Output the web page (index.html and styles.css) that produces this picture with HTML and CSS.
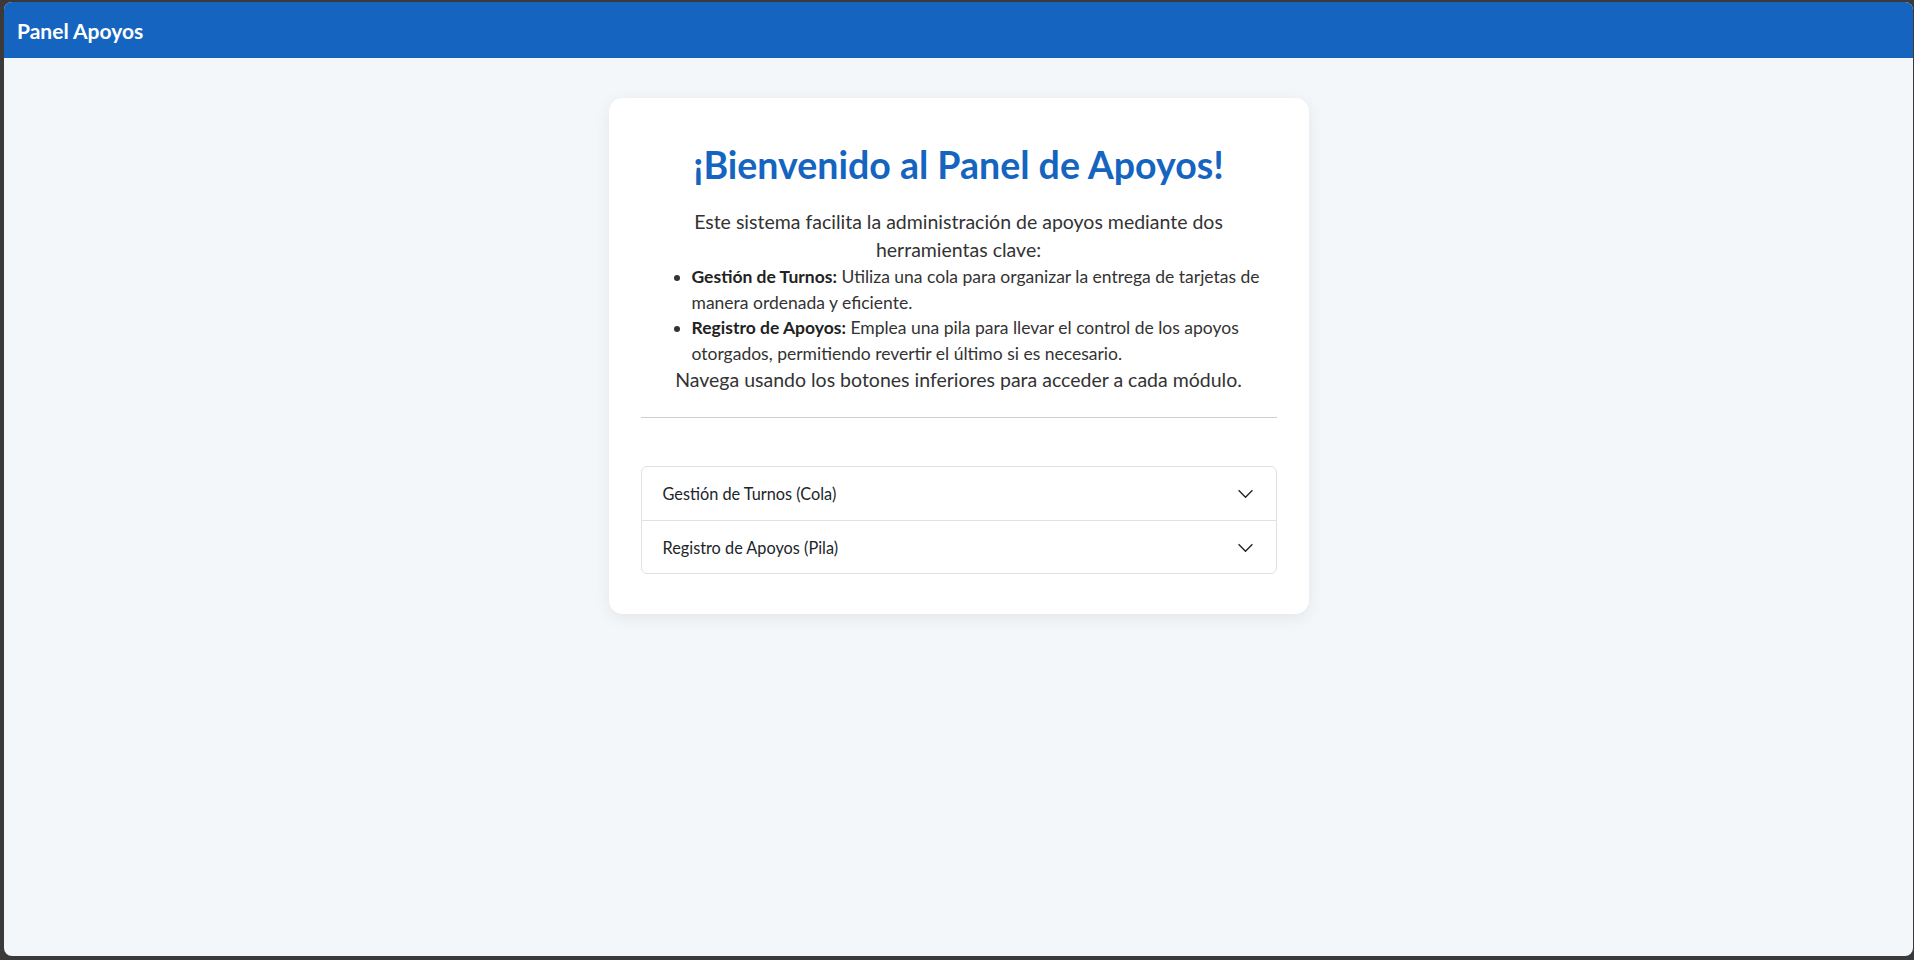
FILE: index.html
```html
<!DOCTYPE html>
<html lang="es">
<head>
<meta charset="utf-8">
<title>Panel Apoyos</title>
<link rel="stylesheet" href="styles.css">
</head>
<body>
<div class="window">
  <header class="navbar">
    <span class="brand">Panel Apoyos</span>
  </header>
  <main class="content">
    <section class="card">
      <h1 class="title">¡Bienvenido al Panel de Apoyos!</h1>
      <div class="intro">
        <p class="lead">Este sistema facilita la administración de apoyos mediante dos herramientas clave:</p>
        <ul class="features">
          <li><strong>Gestión de Turnos:</strong> Utiliza una cola para organizar la entrega de tarjetas de manera ordenada y eficiente.</li>
          <li><strong>Registro de Apoyos:</strong> Emplea una pila para llevar el control de los apoyos otorgados, permitiendo revertir el último si es necesario.</li>
        </ul>
        <p class="lead">Navega usando los botones inferiores para acceder a cada módulo.</p>
      </div>
      <hr class="divider">
      <div class="accordion">
        <div class="acc-item">
          <span>Gestión de Turnos (Cola)</span>
          <svg class="chev" width="17" height="17" viewBox="0 0 16 16"><path d="M1.5 5 L8 11.5 L14.5 5" fill="none" stroke="#212529" stroke-width="1.3"/></svg>
        </div>
        <div class="acc-item">
          <span>Registro de Apoyos (Pila)</span>
          <svg class="chev" width="17" height="17" viewBox="0 0 16 16"><path d="M1.5 5 L8 11.5 L14.5 5" fill="none" stroke="#212529" stroke-width="1.3"/></svg>
        </div>
      </div>
    </section>
  </main>
</div>
</body>
</html>
```

FILE: styles.css
```css
html, body {
  height: 100%;
}
body {
  margin: 0;
  padding: 2px 1px 4px 4px;
  box-sizing: border-box;
  background: #3a3a3a;
  font-family: Lato, "Open Sans", sans-serif;
}
.window {
  height: 100%;
  border-radius: 8px;
  overflow: hidden;
  background: #f4f7fa;
  display: flex;
  flex-direction: column;
}
.navbar {
  height: 56px;
  flex: none;
  background: #1565c0;
  display: flex;
  align-items: center;
  padding-left: 13px;
}
.brand {
  color: #fff;
  font-weight: 700;
  font-size: 21px;
}
.content {
  flex: 1;
  display: flex;
  justify-content: center;
  align-items: flex-start;
  padding-top: 40px;
}
.card {
  width: 700px;
  box-sizing: border-box;
  background: #fff;
  border-radius: 14px;
  box-shadow: 0 4px 16px rgba(0, 0, 0, 0.07);
  padding: 40px 32px 40px;
}
.title {
  margin: 4px 0 21px;
  text-align: center;
  color: #1565c0;
  font-size: 37.5px;
  font-weight: 700;
  line-height: 45px;
}
.intro {
  color: #333;
}
.lead {
  max-width: 590px;
  margin: 0 auto;
  text-align: center;
  font-size: 19.5px;
  line-height: 28px;
}
.features {
  margin: 0;
  padding-left: 51px;
  font-size: 17.5px;
  line-height: 25.5px;
  color: #333;
}
.features strong {
  color: #222;
}
.divider {
  margin: 23px 0 48px;
  border: 0;
  border-top: 1px solid #cfcfcf;
}
.accordion {
  border: 1px solid #dee2e6;
  border-radius: 6px;
}
.acc-item {
  height: 53px;
  display: flex;
  align-items: center;
  justify-content: space-between;
  padding: 0 22px 0 21px;
  font-size: 16.3px;
  color: #212529;
}
.acc-item + .acc-item {
  border-top: 1px solid #dee2e6;
  height: 52px;
}
.chev {
  display: block;
}
```
